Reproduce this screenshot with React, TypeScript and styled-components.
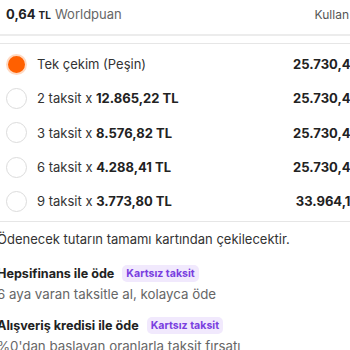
import React from "react";
import styled, { createGlobalStyle } from "styled-components";

const GlobalStyle = createGlobalStyle`
  html, body {
    margin: 0;
    padding: 0;
    background: #fff;
    overflow: hidden;
  }
  body {
    font-family: Inter, "Noto Sans", sans-serif;
    color: #222;
  }
`;

const Page = styled.div`
  width: 384px;
  height: 350px;
  overflow: hidden;
`;

const PuanBar = styled.div`
  display: flex;
  align-items: center;
  justify-content: space-between;
  height: 28px;
  padding: 0 7px 6px 6px;
  border-bottom: 2px solid #ececec;
  font-size: 13px;
`;

const Puan = styled.div`
  display: flex;
  align-items: baseline;
  gap: 4px;
  & b {
    font-weight: 700;
    color: #222;
  }
  & small {
    font-size: 10px;
    font-weight: 700;
    margin-left: -1px;
  }
  & span {
    color: #666;
  }
`;

const UseLink = styled.span`
  color: #555;
  font-size: 12px;
  padding-right: 28px;
`;

const Options = styled.div`
  margin-top: 7px;
  border-top: 1px solid #e6e6e6;
  border-bottom: 1px solid #e6e6e6;
  padding: 3px 0 3px 6px;
`;

const OptionRow = styled.div`
  display: flex;
  align-items: center;
  height: 34.3px;
  font-size: 13px;
  color: #333;
`;

const Radio = styled.span<{ $on?: boolean }>`
  box-sizing: border-box;
  width: 21px;
  height: 21px;
  border-radius: 50%;
  flex: none;
  border: ${(p) => (p.$on ? "2px solid #ffd9c2" : "1px solid #dcdcdc")};
  background: ${(p) => (p.$on ? "#ff6000" : "#fff")};
  margin-right: 10px;
`;

const Label = styled.span`
  flex: 1;
  & b {
    font-weight: 700;
    color: #222;
  }
`;

const Amount = styled.span`
  font-weight: 700;
  color: #222;
  font-size: 13px;
  width: 88px;
  text-align: right;
  margin-right: 6px;
`;

const Lower = styled.div`
  margin-left: -3px;
`;

const Note = styled.div`
  font-size: 13px;
  color: #333;
  padding-top: 9px;
  height: 20px;
`;

const Finance = styled.div`
  margin-top: 12px;
  & + & {
    margin-top: 13px;
  }
`;

const FinanceTitle = styled.div`
  display: flex;
  align-items: center;
  gap: 8px;
  height: 20px;
  font-size: 12.6px;
  font-weight: 700;
  color: #222;
`;

const Badge = styled.span`
  background: #f1e9fd;
  color: #7a3fe0;
  font-size: 10.6px;
  font-weight: 700;
  padding: 2px 4px;
  border-radius: 5px;
`;

const FinanceSub = styled.div`
  font-size: 13.3px;
  color: #666;
  margin-top: 3px;
`;

const options = [
  { label: <>Tek çekim (Peşin)</>, amount: "25.730,45 TL", on: true },
  { label: <>2 taksit x <b>12.865,22 TL</b></>, amount: "25.730,45 TL" },
  { label: <>3 taksit x <b>8.576,82 TL</b></>, amount: "25.730,45 TL" },
  { label: <>6 taksit x <b>4.288,41 TL</b></>, amount: "25.730,45 TL" },
  { label: <>9 taksit x <b>3.773,80 TL</b></>, amount: "33.964,19 TL" },
];

export default function App() {
  return (
    <Page>
      <GlobalStyle />
      <PuanBar>
        <Puan>
          <b>0,64</b>
          <small>TL</small>
          <span>Worldpuan</span>
        </Puan>
        <UseLink>Kullan</UseLink>
      </PuanBar>
      <Options>
        {options.map((o, i) => (
          <OptionRow key={i}>
            <Radio $on={o.on} />
            <Label>{o.label}</Label>
            <Amount>{o.amount}</Amount>
          </OptionRow>
        ))}
      </Options>
      <Lower>
        <Note>Ödenecek tutarın tamamı kartından çekilecektir.</Note>
        <Finance>
          <FinanceTitle>
            Hepsifinans ile öde <Badge>Kartsız taksit</Badge>
          </FinanceTitle>
          <FinanceSub>6 aya varan taksitle al, kolayca öde</FinanceSub>
        </Finance>
        <Finance>
          <FinanceTitle>
            Alışveriş kredisi ile öde <Badge>Kartsız taksit</Badge>
          </FinanceTitle>
          <FinanceSub>%0'dan başlayan oranlarla taksit fırsatı</FinanceSub>
        </Finance>
      </Lower>
    </Page>
  );
}
